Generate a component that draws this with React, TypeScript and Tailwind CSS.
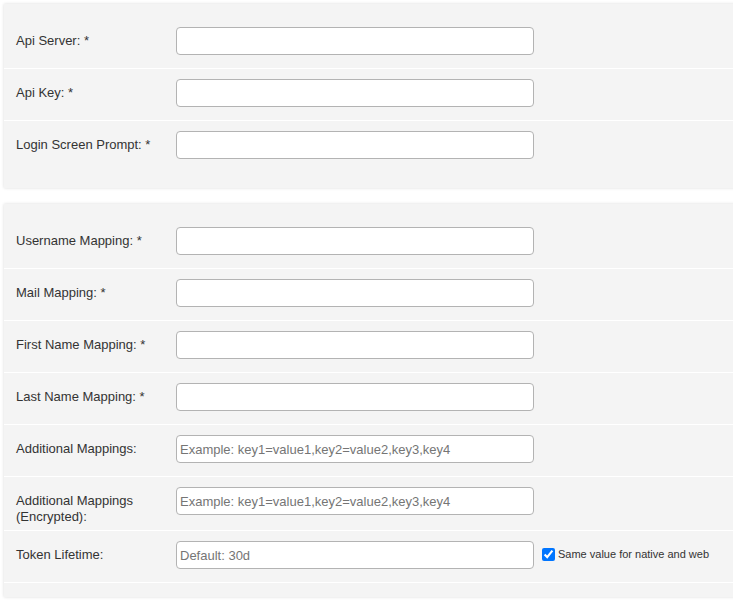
import React from "react";

interface FieldRow {
  label: string;
  placeholder?: string;
  checkbox?: string;
}

const apiRows: FieldRow[] = [
  { label: "Api Server: *" },
  { label: "Api Key: *" },
  { label: "Login Screen Prompt: *" },
];

const mappingRows: FieldRow[] = [
  { label: "Username Mapping: *" },
  { label: "Mail Mapping: *" },
  { label: "First Name Mapping: *" },
  { label: "Last Name Mapping: *" },
  {
    label: "Additional Mappings:",
    placeholder: "Example: key1=value1,key2=value2,key3,key4",
  },
  {
    label: "Additional Mappings (Encrypted):",
    placeholder: "Example: key1=value1,key2=value2,key3,key4",
  },
  {
    label: "Token Lifetime:",
    placeholder: "Default: 30d",
    checkbox: "Same value for native and web",
  },
];

const Row: React.FC<{ row: FieldRow; border: boolean }> = ({ row, border }) => (
  <div
    className={`flex items-start pl-[12px] pt-[10px] pb-[13px] ${
      border ? "border-b border-white" : ""
    }`}
  >
    <label className="w-[160px] pt-[6px] -mb-[8px] pr-[20px] text-[13px] leading-[16px] text-[#333]">
      {row.label}
    </label>
    <input
      type="text"
      placeholder={row.placeholder}
      className="h-[28px] w-[358px] rounded-[4px] border border-[#b3b3b3] bg-white px-[3px] text-[13px] text-[#333] placeholder:text-[#757575] outline-none"
    />
    {row.checkbox && (
      <label className="ml-[8px] mt-[5px] flex items-center gap-[3px] text-[11px] text-[#333]">
        <input type="checkbox" defaultChecked className="m-0 h-[13px] w-[13px]" />
        {row.checkbox}
      </label>
    )}
  </div>
);

export default function App() {
  return (
    <div
      className="min-h-[605px] overflow-hidden bg-white pt-[4px]"
      style={{ fontFamily: '"Liberation Sans", Arial, sans-serif' }}
    >
      <div className="ml-[4px] -mr-[20px] bg-[#f4f4f4] pt-[13px] pb-[16px] shadow-[0_0_3px_rgba(0,0,0,0.15)]">
        {apiRows.map((r, i) => (
          <Row key={r.label} row={r} border={i < apiRows.length - 1} />
        ))}
      </div>
      <div className="mt-[16px] ml-[4px] -mr-[20px] bg-[#f4f4f4] pt-[13px] pb-[14px] shadow-[0_0_3px_rgba(0,0,0,0.15)]">
        {mappingRows.map((r) => (
          <Row key={r.label} row={r} border />
        ))}
      </div>
    </div>
  );
}
